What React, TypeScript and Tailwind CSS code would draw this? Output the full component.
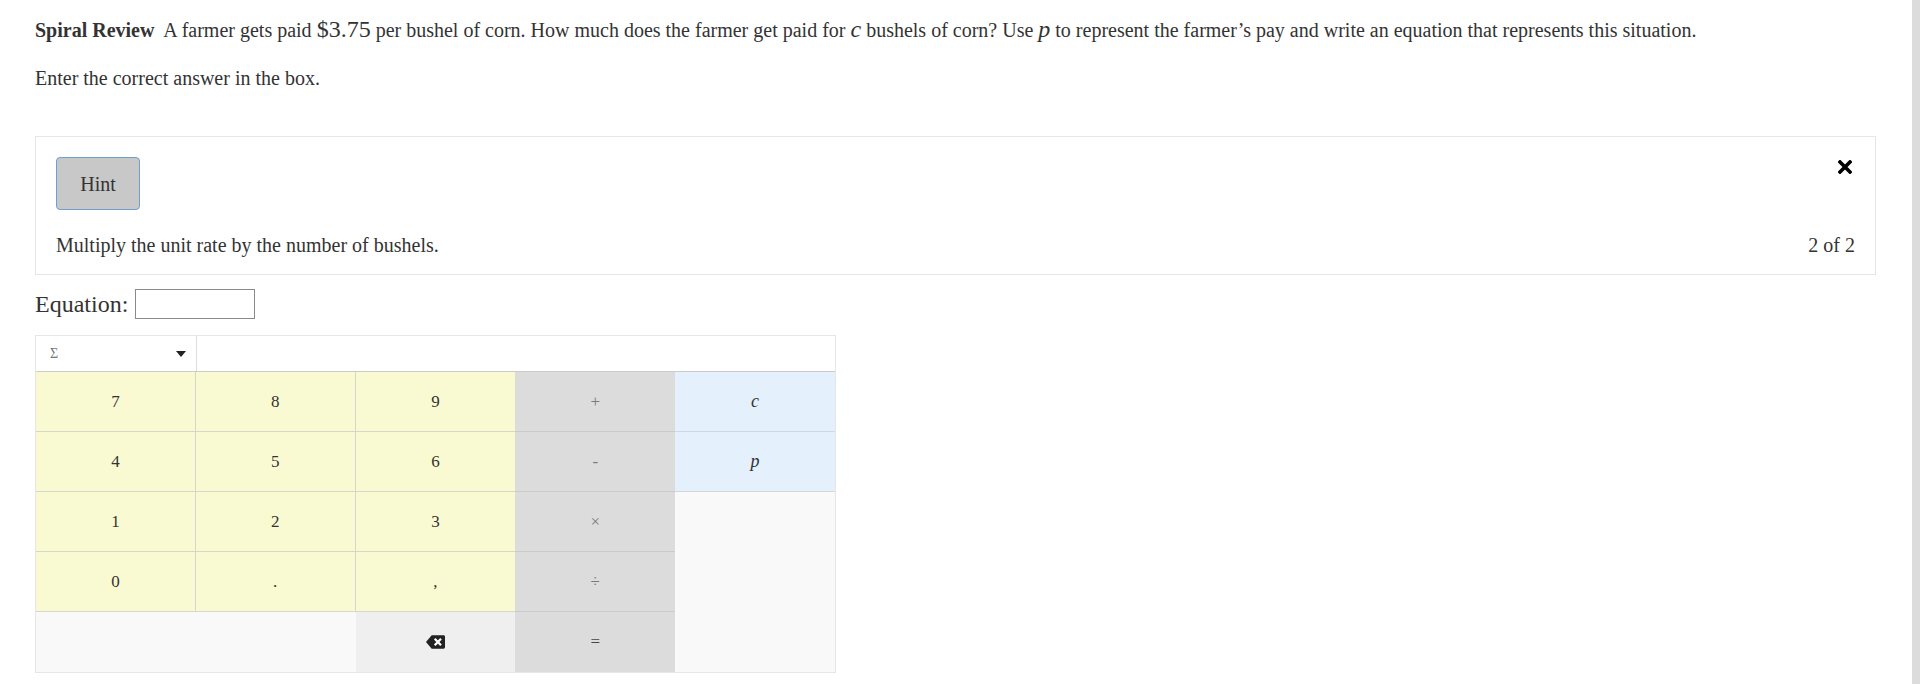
import React from 'react';

const serif = "font-['Liberation_Serif','Times_New_Roman',serif]";

type Key = { label?: React.ReactNode; kind: 'num' | 'op' | 'eq' | 'var' | 'blank' | 'del'; col?: number; cls?: string };

function BackspaceIcon() {
  return (
    <svg width="19" height="14" viewBox="0 0 20 14">
      <path d="M6 0H18.5a1.5 1.5 0 0 1 1.5 1.5v11a1.5 1.5 0 0 1-1.5 1.5H6L0 7z" fill="#222" />
      <path d="M9.2 3.6l6.6 6.8M15.8 3.6l-6.6 6.8" stroke="#fff" strokeWidth="2.4" />
    </svg>
  );
}

function CloseIcon() {
  return (
    <svg width="14" height="14" viewBox="0 0 14 14">
      <path d="M2 2l10 10M12 2L2 12" stroke="#000" strokeWidth="3.6" strokeLinecap="square" />
    </svg>
  );
}

const keys: Key[] = [
  { label: '7', kind: 'num', col: 0 }, { label: '8', kind: 'num', col: 1 }, { label: '9', kind: 'num', col: 2 }, { label: '+', kind: 'op' }, { label: <i className="text-[18px]">c</i>, kind: 'var' },
  { label: '4', kind: 'num', col: 0 }, { label: '5', kind: 'num', col: 1 }, { label: '6', kind: 'num', col: 2 }, { label: '-', kind: 'op' }, { label: <i className="text-[18px]">p</i>, kind: 'var' },
  { label: '1', kind: 'num', col: 0 }, { label: '2', kind: 'num', col: 1 }, { label: '3', kind: 'num', col: 2 }, { label: '×', kind: 'op' }, { kind: 'blank', cls: 'row-span-3' },
  { label: '0', kind: 'num', col: 0 }, { label: '.', kind: 'num', col: 1 }, { label: ',', kind: 'num', col: 2 }, { label: '÷', kind: 'op' },
  { kind: 'blank', cls: 'col-span-2' }, { kind: 'del' }, { label: '=', kind: 'eq' },
];

function KeyCell({ k }: { k: Key }) {
  let style = '';
  if (k.kind === 'num') style = `bg-[#fafad2] text-[#333] border-b border-[#d6d6cc] ${k.col !== 2 ? 'border-r' : ''}`;
  if (k.kind === 'op') style = 'bg-[#dcdcdc] text-[#7a7a7a] border-b border-[#cacaca]';
  if (k.kind === 'eq') style = 'bg-[#dcdcdc] text-[#444]';
  if (k.kind === 'var') style = 'bg-[#e4f0fb] text-[#333] border-b border-[#d0d8e0]';
  if (k.kind === 'blank') style = 'bg-[#f9f9f9]';
  if (k.kind === 'del') style = 'bg-[#efefef]';
  return (
    <div className={`flex items-center justify-center text-[17px] ${style} ${k.cls ?? ''}`}>
      {k.kind === 'del' ? <BackspaceIcon /> : k.label}
    </div>
  );
}

export default function App() {
  return (
    <div className={`flex min-h-[684px] bg-white ${serif}`}>
      <main className="flex-1 pl-[35px] pr-[36px] pt-[14px] text-[#333]">
        <p className="text-[20px] leading-[30px] whitespace-nowrap">
          <b>Spiral Review</b>&nbsp; A farmer gets paid <span className="text-[24px]">$3.75</span> per bushel of corn. How much does the farmer get paid for{' '}
          <i className="text-[24px]">c</i> bushels of corn? Use <i className="text-[24px]">p</i> to represent the farmer’s pay and write an equation that represents this situation.
        </p>
        <p className="mt-[18px] text-[20px] leading-[30px]">Enter the correct answer in the box.</p>

        {/* hint panel */}
        <section className="mt-[43px] border border-[#e6e6e6] px-[20px] pt-[20px] pb-[14px]">
          <div className="flex items-start justify-between">
            <button className="h-[53px] w-[84px] rounded-[4px] border border-[#6f9fcf] bg-[#c8c8c8] text-[20px] text-[#333]">Hint</button>
            <span className="mt-[3px] mr-[3px]"><CloseIcon /></span>
          </div>
          <div className="mt-[20px] flex items-center justify-between text-[20px] leading-[30px]">
            <span>Multiply the unit rate by the number of bushels.</span>
            <span>2 of 2</span>
          </div>
        </section>

        <div className="mt-[14px] flex items-center gap-[7px]">
          <span className="text-[24px] leading-[30px]">Equation:</span>
          <input className="h-[30px] w-[120px] border border-[#8a8a8a] bg-white outline-none" />
        </div>

        {/* keypad */}
        <div className="mt-[16px] w-[801px] border border-[#e6e6e6]">
          <div className="flex h-[36px] border-b border-[#cccccc] bg-white">
            <div className="flex w-[161px] items-center justify-between border-r border-[#dddddd] pl-[14px] pr-[10px]">
              <span className="text-[14px] text-[#777]">Σ</span>
              <svg width="10" height="6" viewBox="0 0 10 6"><path d="M0 0h10L5 6z" fill="#222" /></svg>
            </div>
          </div>
          <div className="grid grid-cols-[repeat(5,159.8px)] grid-rows-[repeat(5,60px)]">
            {keys.map((k, i) => <KeyCell key={i} k={k} />)}
          </div>
        </div>
      </main>
      <aside className="w-[8px] shrink-0 bg-[#dcdcdc]" />
    </div>
  );
}
